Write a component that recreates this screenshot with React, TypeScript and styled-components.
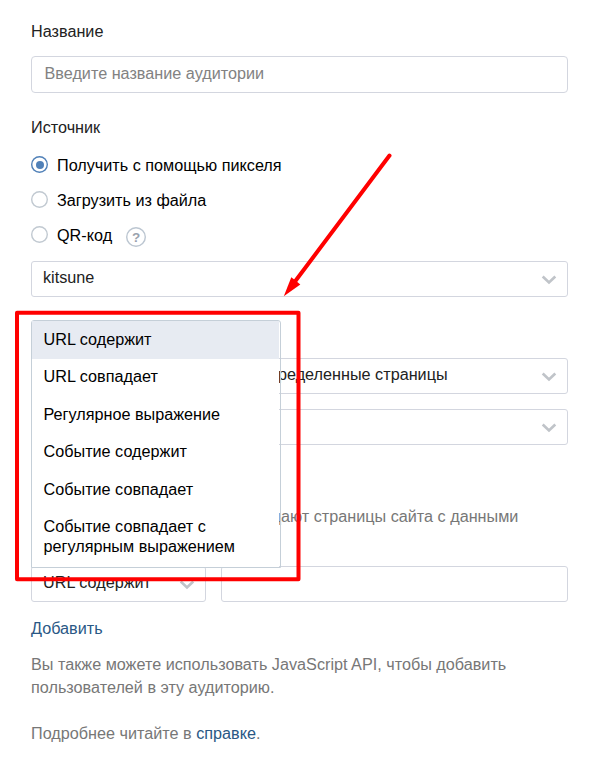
import React from 'react';
import styled, { createGlobalStyle } from 'styled-components';

const GlobalStyle = createGlobalStyle`
  * { box-sizing: border-box; }
  body {
    margin: 0;
    background: #fff;
    font-family: "Liberation Sans", Arial, sans-serif;
    font-size: 16.22px;
    color: #000;
  }
`;

const Page = styled.main`
  position: relative;
  width: 590px;
  height: 761px;
  padding: 21px 22px 0 31px;
  overflow: hidden;
`;

const Label = styled.div`
  height: 20px;
  line-height: 20px;
  color: #222;
`;

const NameInput = styled.input`
  display: block;
  width: 100%;
  height: 37px;
  margin: 15px 0 24px;
  padding: 0 12.5px 3px;
  border: 1px solid #d3d6df;
  border-radius: 4px;
  outline: none;
  background: #fff;
  font: inherit;
  color: #000;
  &::placeholder { color: #828282; opacity: 1; }
`;

const RadioList = styled.div`
  display: flex;
  flex-direction: column;
  margin: 11px 0 8px;
`;

const RadioRow = styled.div`
  display: flex;
  align-items: center;
  height: 35px;
`;

const RadioMark = styled.span<{ $checked?: boolean }>`
  display: flex;
  align-items: center;
  justify-content: center;
  width: 17px;
  height: 17px;
  margin: 0 9px 2px 0;
  border-radius: 50%;
  box-shadow: inset 0 0 0 1.4px ${(p) => (p.$checked ? '#5181b8' : '#c1c9d1')};
  &::after {
    content: "";
    width: 8px;
    height: 8px;
    border-radius: 50%;
    background: ${(p) => (p.$checked ? '#5181b8' : 'transparent')};
  }
`;

const Help = styled.span`
  display: flex;
  align-items: center;
  justify-content: center;
  width: 20px;
  height: 20px;
  margin: 3px 0 0 14px;
  border-radius: 50%;
  box-shadow: inset 0 0 0 1.4px #bcc6d1;
  color: #99a2ad;
  font-size: 13.5px;
  font-weight: 700;
`;

const Field = styled.div<{ $gap?: number; $indent?: number }>`
  display: flex;
  align-items: center;
  justify-content: space-between;
  width: 100%;
  height: 36px;
  margin-top: ${(p) => p.$gap ?? 0}px;
  padding: 0 10px 0 ${(p) => p.$indent ?? 11}px;
  border: 1px solid #d3d6df;
  border-radius: 3px;
  background: #fff;
  color: #222;
`;

const FieldText = styled.span`
  line-height: 20px;
  padding-bottom: 4px;
  white-space: nowrap;
`;

const ChevronSvg = styled.svg`
  display: block;
  width: 16px;
  height: 10px;
  margin-top: 2px;
`;

const RuleHint = styled.p`
  height: 20px;
  margin: 61px 0 40px;
  padding-left: 240.5px;
  line-height: 20px;
  color: #777;
  white-space: nowrap;
`;

const RuleRow = styled.div`
  display: grid;
  grid-template-columns: 175px 347px;
  gap: 15px;
`;

const Link = styled.a`
  color: #2a5885;
  text-decoration: none;
`;

const AddRow = styled.div`
  height: 20px;
  margin-top: 16px;
  line-height: 20px;
`;

const Paragraph = styled.p<{ $gap: number }>`
  margin: ${(p) => p.$gap}px 0 0;
  line-height: 23px;
  color: #777;
`;

const Menu = styled.div`
  position: absolute;
  left: 31px;
  top: 320px;
  width: 250px;
  height: 248px;
  padding-right: 1px;
  border: 1px solid #c5cfd8;
  border-radius: 3px 3px 0 0;
`;

const MenuList = styled.ul`
  height: 100%;
  margin: 0;
  padding: 0;
  list-style: none;
  background: #fff;
`;

const MenuItem = styled.li<{ $active?: boolean }>`
  min-height: 37.5px;
  padding: 7.5px 11.5px 10px;
  line-height: 20px;
  background: ${(p) => (p.$active ? '#e7ebf2' : 'transparent')};
`;

const Annotation = styled.svg`
  position: absolute;
  inset: 0;
  pointer-events: none;
`;

const Chevron = () => (
  <ChevronSvg viewBox="0 0 16 10" fill="none">
    <path d="M1.7 1.5 8 7.4 14.3 1.5" stroke="#c0c4c9" strokeWidth="2.7" />
  </ChevronSvg>
);

const options = [
  'URL содержит',
  'URL совпадает',
  'Регулярное выражение',
  'Событие содержит',
  'Событие совпадает',
  'Событие совпадает с регулярным выражением',
];

export default function App() {
  return (
    <>
      <GlobalStyle />
      <Page>
        <Label>Название</Label>
        <NameInput placeholder="Введите название аудитории" />
        <Label>Источник</Label>
        <RadioList>
          <RadioRow><RadioMark $checked />Получить с помощью пикселя</RadioRow>
          <RadioRow><RadioMark />Загрузить из файла</RadioRow>
          <RadioRow><RadioMark />QR-код<Help>?</Help></RadioRow>
        </RadioList>
        <Field><FieldText>kitsune</FieldText><Chevron /></Field>
        <Field $gap={61} $indent={246}><FieldText>ределенные страницы</FieldText><Chevron /></Field>
        <Field $gap={15}><FieldText /><Chevron /></Field>
        <RuleHint>дают страницы сайта с данными</RuleHint>
        <RuleRow>
          <Field><FieldText>URL содержит</FieldText><Chevron /></Field>
          <Field />
        </RuleRow>
        <AddRow><Link>Добавить</Link></AddRow>
        <Paragraph $gap={15}>
          Вы также можете использовать JavaScript API, чтобы добавить<br />
          пользователей в эту аудиторию.
        </Paragraph>
        <Paragraph $gap={23}>Подробнее читайте в <Link>справке</Link>.</Paragraph>

        <Menu>
          <MenuList>
            {options.map((option, i) => (
              <MenuItem key={option} $active={i === 0}>{option}</MenuItem>
            ))}
          </MenuList>
        </Menu>

        <Annotation width="590" height="761" viewBox="0 0 590 761">
          <rect x="17" y="312.8" width="281.5" height="266.4" fill="none" stroke="#f00" strokeWidth="4" strokeLinejoin="round" />
          <path d="M389.5 155.5 295 281.5" stroke="#f00" strokeWidth="4" strokeLinecap="round" />
          <path d="M283.8 296.3 291.3 277.3 295.5 280.5 300.3 284.4Z" fill="#f00" />
        </Annotation>
      </Page>
    </>
  );
}
